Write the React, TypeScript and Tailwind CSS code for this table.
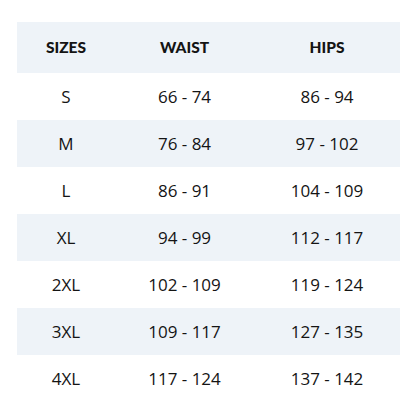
import React from "react";

const rows = [
  ["S", "66 - 74", "86 - 94"],
  ["M", "76 - 84", "97 - 102"],
  ["L", "86 - 91", "104 - 109"],
  ["XL", "94 - 99", "112 - 117"],
  ["2XL", "102 - 109", "119 - 124"],
  ["3XL", "109 - 117", "127 - 135"],
  ["4XL", "117 - 124", "137 - 142"],
];

export default function App() {
  return (
    <div
      className="w-[416px] h-[416px] bg-white pt-[22px] pl-[17px] text-[#141414]"
      style={{ fontFamily: "'Open Sans', Lato, sans-serif" }}
    >
      <div className="w-[383px] flex flex-col">
        <div
          className="grid grid-cols-[98px_139px_146px] h-[51px] items-center bg-[#eef3f8] text-[15.5px] font-bold"
          style={{ fontFamily: "Lato, sans-serif", fontWeight: 900 }}
        >
          <div className="text-center">SIZES</div>
          <div className="text-center">WAIST</div>
          <div className="text-center">HIPS</div>
        </div>
        {rows.map((r, i) => (
          <div
            key={r[0]}
            className={
              "grid grid-cols-[98px_139px_146px] h-[47px] items-center text-[17px] " +
              (i % 2 === 1 ? "bg-[#eef3f8]" : "bg-white")
            }
          >
            <div className="text-center">{r[0]}</div>
            <div className="text-center">{r[1]}</div>
            <div className="text-center">{r[2]}</div>
          </div>
        ))}
      </div>
    </div>
  );
}
